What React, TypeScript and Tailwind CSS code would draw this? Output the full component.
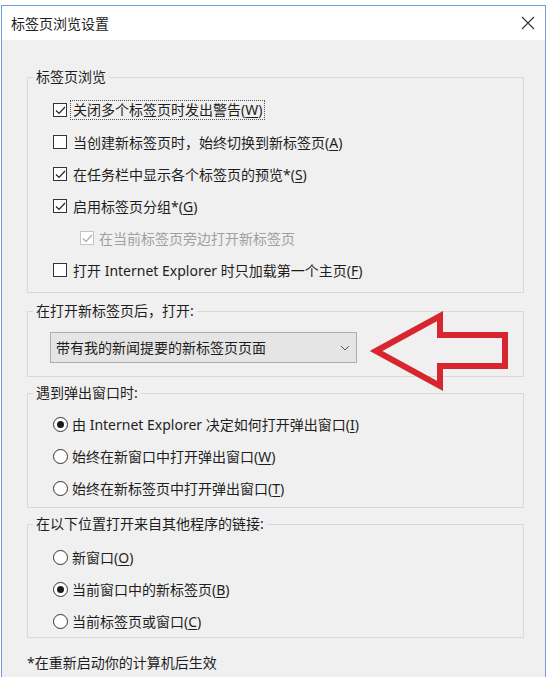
import React from "react"

function Key({ k }: { k: string }) {
  return (
    <>
      (<span className="underline underline-offset-2 decoration-1">{k}</span>)
    </>
  )
}

function CheckBox({ checked, disabled }: { checked: boolean; disabled?: boolean }) {
  const stroke = disabled ? "#a8a8a8" : "#222"
  return (
    <span
      className={`w-[14px] h-[14px] shrink-0 border bg-white flex items-center justify-center ${
        disabled ? "border-[#c4c4c4]" : "border-[#333]"
      }`}
    >
      {checked && (
        <svg width="11" height="9" viewBox="0 0 11 9">
          <path d="M1 4.5 L4 7.5 L10 1" fill="none" stroke={stroke} strokeWidth="1.2" />
        </svg>
      )}
    </span>
  )
}

function Radio({ checked }: { checked: boolean }) {
  return (
    <span className="w-[15px] h-[15px] shrink-0 rounded-full border border-[#333] bg-white flex items-center justify-center">
      {checked && <span className="w-[7px] h-[7px] rounded-full bg-[#1a1a1a]" />}
    </span>
  )
}

function Group({ title, className, children }: { title: string; className?: string; children: React.ReactNode }) {
  return (
    <fieldset className={`w-[497px] border border-[#d9d9d9] ${className ?? ""}`}>
      <legend className="ml-[5px] px-[3px] leading-[20px] text-[14px] text-[#1e1e1e]">{title}</legend>
      {children}
    </fieldset>
  )
}

export default function App() {
  return (
    <div className="relative w-[556px] h-[677px] bg-white pt-[5px] pl-[1px] overflow-hidden font-['Noto_Sans','Noto_Sans_CJK_SC',sans-serif] text-[#1e1e1e]">
      <div className="w-[545px] h-[700px] border-t border-x border-[#6f9edb] flex flex-col">
        {/* title bar */}
        <div className="h-[34px] shrink-0 bg-white flex items-center justify-between pl-[9px] pr-[9px]">
          <span className="text-[14px] text-[#222]">标签页浏览设置</span>
          <svg width="14" height="14" viewBox="0 0 14 14" className="mr-[1px]">
            <path d="M1 1 L13 13 M13 1 L1 13" stroke="#333" strokeWidth="1.1" />
          </svg>
        </div>

        {/* body */}
        <div className="flex-1 bg-[#f0f0f0] pt-[27px] pl-[25px] text-[14px]">
          <Group title="标签页浏览" className="pt-[7px] pb-[6px]">
            <div className="h-8 flex items-center pl-[25px]">
              <CheckBox checked />
              <span className="ml-[3px] px-[2px] leading-[18px] border border-dotted border-[#555]">
                关闭多个标签页时发出警告<Key k="W" />
              </span>
            </div>
            <div className="h-8 flex items-center pl-[25px] gap-[6px]">
              <CheckBox checked={false} />
              <span>
                当创建新标签页时，始终切换到新标签页<Key k="A" />
              </span>
            </div>
            <div className="h-8 flex items-center pl-[25px] gap-[6px]">
              <CheckBox checked />
              <span>
                在任务栏中显示各个标签页的预览*<Key k="S" />
              </span>
            </div>
            <div className="h-8 flex items-center pl-[25px] gap-[6px]">
              <CheckBox checked />
              <span>
                启用标签页分组*<Key k="G" />
              </span>
            </div>
            <div className="h-8 flex items-center pl-[52px] gap-[5px]">
              <CheckBox checked disabled />
              <span className="text-[#a0a0a0]">在当前标签页旁边打开新标签页</span>
            </div>
            <div className="h-8 flex items-center pl-[25px] gap-[6px]">
              <CheckBox checked={false} />
              <span>
                打开 Internet Explorer 时只加载第一个主页<Key k="F" />
              </span>
            </div>
          </Group>

          <Group title="在打开新标签页后，打开:" className="mt-[8px] pt-[11px] pb-[13px]">
            <div className="pl-[22px]">
              <div className="w-[307px] h-[31px] bg-[#e5e5e5] border border-[#adadad] flex items-center justify-between pl-[5px] pr-[6px]">
                <span>带有我的新闻提要的新标签页页面</span>
                <svg width="10" height="6" viewBox="0 0 10 6">
                  <path d="M1 1 L5 5 L9 1" fill="none" stroke="#555" strokeWidth="1" />
                </svg>
              </div>
            </div>
          </Group>

          <Group title="遇到弹出窗口时:" className="mt-[6px] pt-[5px] pb-[3px]">
            <div className="h-8 flex items-center pl-[25px] gap-[4px]">
              <Radio checked />
              <span>
                由 Internet Explorer 决定如何打开弹出窗口<Key k="I" />
              </span>
            </div>
            <div className="h-8 flex items-center pl-[25px] gap-[4px]">
              <Radio checked={false} />
              <span>
                始终在新窗口中打开弹出窗口<Key k="W" />
              </span>
            </div>
            <div className="h-8 flex items-center pl-[25px] gap-[4px]">
              <Radio checked={false} />
              <span>
                始终在新标签页中打开弹出窗口<Key k="T" />
              </span>
            </div>
          </Group>

          <Group title="在以下位置打开来自其他程序的链接:" className="mt-[6px] pt-[7px]">
            <div className="h-8 flex items-center pl-[25px] gap-[4px]">
              <Radio checked={false} />
              <span>
                新窗口<Key k="O" />
              </span>
            </div>
            <div className="h-8 flex items-center pl-[25px] gap-[4px]">
              <Radio checked />
              <span>
                当前窗口中的新标签页<Key k="B" />
              </span>
            </div>
            <div className="h-8 flex items-center pl-[25px] gap-[4px]">
              <Radio checked={false} />
              <span>
                当前标签页或窗口<Key k="C" />
              </span>
            </div>
          </Group>

          <div className="mt-[15px] leading-[20px]">*在重新启动你的计算机后生效</div>
        </div>
      </div>

      {/* red annotation arrow */}
      <svg
        className="absolute left-[368px] top-[308px]"
        width="148"
        height="86"
        viewBox="0 0 148 86"
      >
        <polygon
          points="8,43 72,8 72,27 137,27 137,58 72,58 72,78"
          fill="none"
          stroke="#d7262f"
          strokeWidth="6"
          strokeLinejoin="miter"
        />
      </svg>
    </div>
  )
}
